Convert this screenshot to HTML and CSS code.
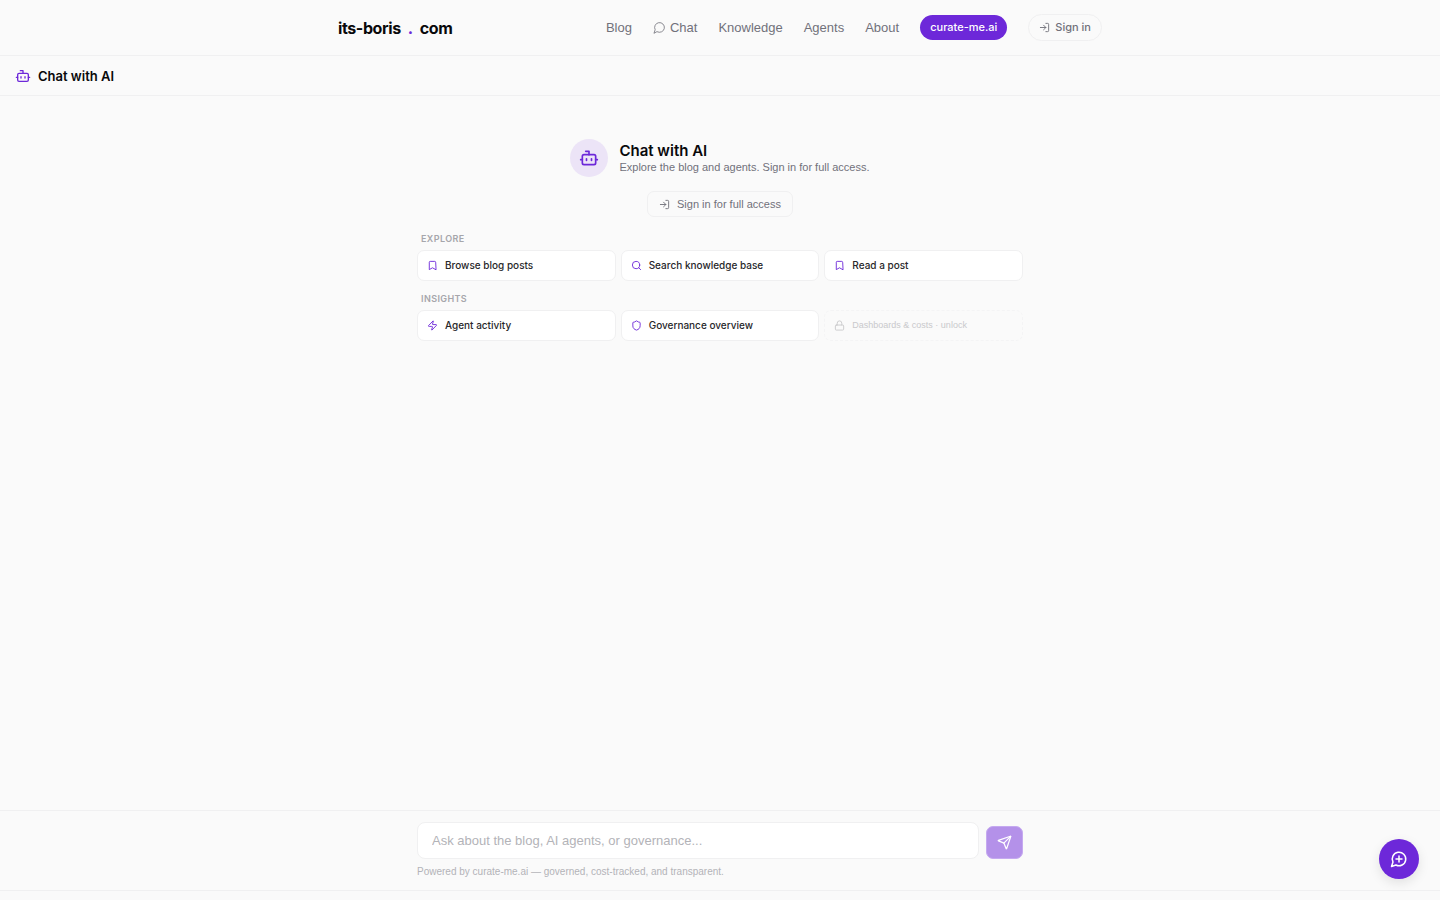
FILE: index.html
```html
<!DOCTYPE html>
<html lang="en">

<head>
    <meta charset="UTF-8">
    <meta name="viewport" content="width=device-width, initial-scale=1.0">
    <title>Chat with AI</title>
    <link rel="stylesheet" href="styles.css">
</head>

<body>
    <!-- shared icons -->
    <svg class="sprite" aria-hidden="true">
        <symbol id="icon-bot" viewBox="0 0 24 24">
            <path d="M12 8V4H8" />
            <rect width="16" height="12" x="4" y="8" rx="2" />
            <path d="M2 14h2M20 14h2M15 13v2M9 13v2" />
        </symbol>
        <symbol id="icon-login" viewBox="0 0 24 24">
            <path d="M15 3h4a2 2 0 0 1 2 2v14a2 2 0 0 1-2 2h-4" />
            <path d="m10 17 5-5-5-5M15 12H3" />
        </symbol>
        <symbol id="icon-bookmark" viewBox="0 0 24 24">
            <path d="m19 21-7-4-7 4V5a2 2 0 0 1 2-2h10a2 2 0 0 1 2 2z" />
        </symbol>
        <symbol id="icon-message" viewBox="0 0 24 24">
            <path d="M7.9 20A9 9 0 1 0 4 16.1L2 22Z" />
        </symbol>
    </svg>

    <header class="site-header">
        <div class="header-inner">
            <a class="logo" href="#"><span>its-boris</span><span class="dot">.</span><span>com</span></a>
            <nav class="nav">
                <a href="#">Blog</a>
                <a class="nav-chat" href="#"><svg class="icon icon-thin"><use href="#icon-message" /></svg>Chat</a>
                <a href="#">Knowledge</a>
                <a href="#">Agents</a>
                <a href="#">About</a>
                <a class="nav-pill" href="#">curate-me.ai</a>
                <button class="nav-signin" type="button"><svg class="icon icon-sm"><use href="#icon-login" /></svg>Sign in</button>
            </nav>
        </div>
    </header>

    <main class="chat">
        <div class="chat-bar">
            <svg class="icon icon-md"><use href="#icon-bot" /></svg>
            <h1>Chat with AI</h1>
        </div>

        <div class="chat-body">
            <div class="intro">
                <div class="avatar"><svg class="icon icon-lg"><use href="#icon-bot" /></svg></div>
                <div>
                    <h2>Chat with AI</h2>
                    <p>Explore the blog and agents. Sign in for full access.</p>
                </div>
            </div>
            <button class="unlock" type="button"><svg class="icon icon-sm"><use href="#icon-login" /></svg>Sign in for full access</button>

            <section class="group">
                <h3>Explore</h3>
                <div class="cards">
                    <button class="card" type="button"><svg class="icon icon-sm"><use href="#icon-bookmark" /></svg>Browse blog posts</button>
                    <button class="card" type="button"><svg class="icon icon-sm" viewBox="0 0 24 24"><circle cx="11" cy="11" r="8" /><path d="m21 21-4.3-4.3" /></svg>Search knowledge base</button>
                    <button class="card" type="button"><svg class="icon icon-sm"><use href="#icon-bookmark" /></svg>Read a post</button>
                </div>
            </section>

            <section class="group">
                <h3>Insights</h3>
                <div class="cards">
                    <button class="card" type="button"><svg class="icon icon-sm" viewBox="0 0 24 24"><path d="M4 14a1 1 0 0 1-.78-1.63l9.9-10.2a.5.5 0 0 1 .86.46l-1.92 6.02A1 1 0 0 0 13 10h7a1 1 0 0 1 .78 1.63l-9.9 10.2a.5.5 0 0 1-.86-.46l1.92-6.02A1 1 0 0 0 11 14z" /></svg>Agent activity</button>
                    <button class="card" type="button"><svg class="icon icon-sm" viewBox="0 0 24 24"><path d="M20 13c0 5-3.5 7.5-7.66 8.95a1 1 0 0 1-.67-.01C7.5 20.5 4 18 4 13V6a1 1 0 0 1 1-1c2 0 4.5-1.2 6.24-2.72a1.17 1.17 0 0 1 1.52 0C14.51 3.81 17 5 19 5a1 1 0 0 1 1 1z" /></svg>Governance overview</button>
                    <button class="card locked" type="button"><svg class="icon icon-sm" viewBox="0 0 24 24"><rect width="18" height="11" x="3" y="11" rx="2" /><path d="M7 11V7a5 5 0 0 1 10 0v4" /></svg>Dashboards &amp; costs · unlock</button>
                </div>
            </section>
        </div>

        <div class="composer">
            <form class="composer-inner">
                <div class="composer-row">
                    <input type="text" aria-label="Message" placeholder="Ask about the blog, AI agents, or governance...">
                    <button class="send" type="submit" aria-label="Send" disabled>
                        <svg class="icon icon-send" viewBox="0 0 24 24"><path d="M14.536 21.686a.5.5 0 0 0 .937-.024l6.5-19a.496.496 0 0 0-.635-.635l-19 6.5a.5.5 0 0 0-.024.937l7.93 3.18a2 2 0 0 1 1.112 1.11z" /><path d="m21.854 2.147-10.94 10.939" /></svg>
                    </button>
                </div>
                <p>Powered by curate-me.ai — governed, cost-tracked, and transparent.</p>
            </form>
        </div>
    </main>

    <footer class="site-footer"></footer>

    <button class="fab" type="button" aria-label="New chat">
        <svg class="icon icon-fab" viewBox="0 0 24 24"><path d="M7.9 20A9 9 0 1 0 4 16.1L2 22Z" /><path d="M8 12h8M12 8v8" /></svg>
    </button>
</body>

</html>
```

FILE: styles.css
```css
* {
    box-sizing: border-box;
}

body {
    display: flex;
    flex-direction: column;
    min-height: 100vh;
    margin: 0;
    background-color: #fafafa;
    color: #09090b;
    font-family: "Liberation Sans", Arial, sans-serif;
    font-size: 13px;
    line-height: 20px;
}

h1,
h2,
h3,
p {
    margin: 0;
}

a {
    color: inherit;
    text-decoration: none;
}

button,
input {
    font-family: inherit;
}

button {
    cursor: pointer;
}

/* medium and bold text */
.logo,
.nav-pill,
.nav-signin,
.card,
h1,
h2,
h3 {
    font-family: Inter, "Liberation Sans", sans-serif;
}

.sprite {
    display: none;
}

.icon {
    flex: none;
    width: 13px;
    height: 13px;
    fill: none;
    stroke: currentColor;
    stroke-width: 2;
    stroke-linecap: round;
    stroke-linejoin: round;
}

.icon-thin {
    stroke-width: 1.5;
}

.icon-sm {
    width: 11px;
    height: 11px;
}

.icon-md {
    width: 16px;
    height: 16px;
}

.icon-lg {
    width: 20px;
    height: 20px;
}

.icon-send {
    width: 15px;
    height: 15px;
}

.icon-fab {
    width: 18px;
    height: 18px;
}

/* header */
.site-header {
    border-bottom: 1px solid #f0f0f1;
}

.header-inner {
    display: flex;
    align-items: center;
    justify-content: space-between;
    max-width: 764px;
    height: 55px;
    margin: 0 auto;
}

.logo {
    display: flex;
    gap: 7px;
    font-size: 16px;
    font-weight: 700;
    letter-spacing: -0.4px;
}

.logo .dot {
    color: #6d28d9;
}

.nav {
    display: flex;
    align-items: center;
    gap: 21px;
    color: #71717a;
}

.nav-chat {
    display: flex;
    align-items: center;
    gap: 4px;
}

.nav-pill {
    padding: 3px 10px;
    border-radius: 13px;
    background-color: #6d28d9;
    color: #fff;
    font-size: 11px;
    font-weight: 500;
    line-height: 19px;
}

.nav-signin {
    display: flex;
    align-items: center;
    gap: 5px;
    padding: 4px 10px;
    border: 1px solid #f0f0f1;
    border-radius: 14px;
    background: none;
    color: #71717a;
    font-size: 11px;
    font-weight: 500;
    line-height: 17px;
}

/* chat */
.chat {
    display: flex;
    flex: 1;
    flex-direction: column;
}

.chat-bar {
    display: flex;
    align-items: center;
    gap: 7px;
    height: 40px;
    padding: 0 15px;
    border-bottom: 1px solid #f0f0f1;
    color: #6d28d9;
}

.chat-bar h1 {
    color: #09090b;
    font-size: 13px;
    font-weight: 600;
}

.chat-body {
    display: flex;
    flex: 1;
    flex-direction: column;
    align-items: center;
    width: 100%;
    max-width: 606px;
    margin: 0 auto;
    padding-top: 43px;
}

.intro {
    display: flex;
    align-items: center;
    gap: 11px;
    margin-bottom: 14px;
}

.avatar {
    display: flex;
    align-items: center;
    justify-content: center;
    width: 38px;
    height: 38px;
    border-radius: 50%;
    background-color: #ece4f7;
    color: #6d28d9;
}

.intro h2 {
    font-size: 15px;
    font-weight: 600;
    line-height: 18px;
}

.intro p {
    color: #71717a;
    font-size: 11px;
    line-height: 15px;
}

.unlock {
    display: flex;
    align-items: center;
    gap: 7px;
    margin-bottom: 4px;
    padding: 4px 11px;
    border: 1px solid #f0f0f1;
    border-radius: 7px;
    background: none;
    color: #71717a;
    font-size: 11px;
    line-height: 16px;
}

.group {
    width: 100%;
    margin-top: 11px;
}

.group h3 {
    margin-bottom: 4px;
    padding: 0 4px;
    color: #a6a6ab;
    font-size: 9px;
    font-weight: 600;
    letter-spacing: 0.4px;
    line-height: 14px;
    text-transform: uppercase;
}

.cards {
    display: grid;
    grid-template-columns: repeat(3, 1fr);
    gap: 5px;
}

.card {
    display: flex;
    align-items: center;
    gap: 7px;
    padding: 7px 9px;
    border: 1px solid #f0f0f1;
    border-radius: 7px;
    background-color: #fff;
    color: #27272a;
    font-size: 10px;
    font-weight: 500;
    line-height: 15px;
}

.card .icon {
    color: #6d28d9;
}

.card.locked {
    border: 1px dashed #f4f4f5;
    background: none;
    color: #c9c9cc;
    font-family: inherit;
    font-size: 9px;
    font-weight: 400;
}

.card.locked .icon {
    color: #c9c9cc;
}

/* message box */
.composer {
    border-top: 1px solid #f0f0f1;
}

.composer-inner {
    max-width: 606px;
    margin: 0 auto;
    padding: 11px 0;
}

.composer-row {
    display: flex;
    align-items: flex-end;
    gap: 7px;
}

.composer input {
    flex: 1;
    min-width: 0;
    height: 37px;
    padding: 0 14px;
    border: 1px solid #f0f0f1;
    border-radius: 8px;
    background-color: #fff;
    font-size: 13px;
}

.composer input::placeholder {
    color: #b3b3b8;
}

.composer p {
    margin-top: 5px;
    color: #b3b3b8;
    font-size: 10px;
    line-height: 15px;
}

.send {
    display: flex;
    align-items: center;
    justify-content: center;
    width: 37px;
    height: 33px;
    padding: 0;
    border: 1px solid #c5a9f0;
    border-radius: 7px;
    background-color: #b491e9;
    color: #fff;
}

.site-footer {
    height: 10px;
    border-top: 1px solid #f0f0f1;
}

.fab {
    position: fixed;
    right: 21px;
    bottom: 21px;
    display: flex;
    align-items: center;
    justify-content: center;
    width: 40px;
    height: 40px;
    padding: 0;
    border: 0;
    border-radius: 50%;
    background-color: #6d28d9;
    color: #fff;
    box-shadow: 0 4px 12px rgba(0, 0, 0, 0.1);
}
```
